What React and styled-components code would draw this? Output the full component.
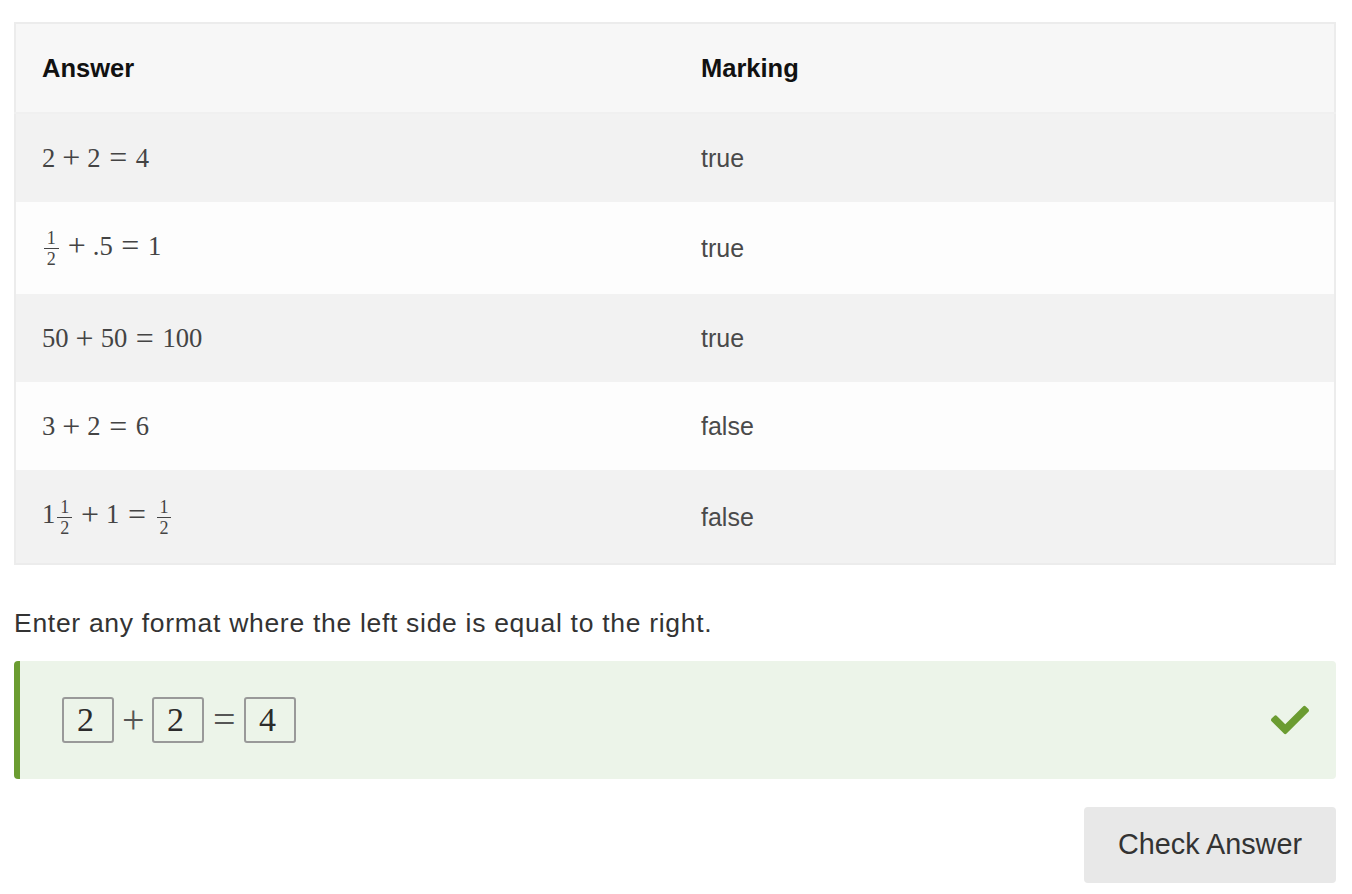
import * as React from 'react'
import { createGlobalStyle, default as styled } from 'styled-components'
import { FaCheck } from 'react-icons/fa'

const Global = createGlobalStyle`
  body {
    margin: 0;
    background: #fff;
    font-family: "Liberation Sans", Arial, sans-serif;
  }
`

const Page = styled.div`
  padding: 22px 16px 12px 14px;
`

const Table = styled.table`
  width: 100%;
  border-collapse: collapse;
  border: 2px solid #ececec;
`

const Th = styled.th`
  width: 50%;
  text-align: left;
  padding: 26px;
  line-height: 36px;
  font-size: 25.5px;
  font-weight: bold;
  color: #111;
  background: #f7f7f7;
  border-bottom: 2px solid #f0f0f0;
`

const Tr = styled.tr`
  background: ${p => (p.$alt ? '#fdfdfd' : '#f2f2f2')};
`

const Td = styled.td`
  padding: 26px;
  line-height: 36px;
  font-size: 25px;
  color: #4a4a4a;
  vertical-align: middle;
`

const MathExpr = styled.span`
  font-family: "Liberation Serif", "DejaVu Serif", serif;
  font-size: 26.6px;
  color: #444;
  white-space: nowrap;
`

const Op = styled.span`
  display: inline-block;
  font-size: 1.2em;
  line-height: 1;
  vertical-align: -0.04em;
  margin: 0 ${p => p.$space}em;
`

const Frac = styled.span`
  display: inline-flex;
  flex-direction: column;
  align-items: center;
  vertical-align: middle;
  font-size: 0.68em;
  line-height: 1;
  margin: 0 0.12em;
`

const FracTop = styled.span`
  padding: 0 0.15em 1px;
  border-bottom: 1px solid currentColor;
`

const FracBottom = styled.span`
  padding-top: 1px;
`

const Instruction = styled.p`
  margin: 40px 0 20px;
  font-size: 26.5px;
  letter-spacing: 0.7px;
  line-height: 36px;
  color: #333;
`

const Feedback = styled.div`
  display: flex;
  align-items: center;
  justify-content: space-between;
  height: 118px;
  box-sizing: border-box;
  padding: 0 27px 0 42px;
  background: #ecf4e9;
  border-left: 6px solid #6b9c31;
  border-radius: 4px;
`

const Field = styled.div`
  display: flex;
  align-items: center;
  font-family: "Liberation Serif", "DejaVu Serif", serif;
  color: #333;
`

const Slot = styled.span`
  display: inline-flex;
  align-items: center;
  box-sizing: border-box;
  width: 52px;
  height: 46px;
  padding-left: 13px;
  border: 2px solid #999;
  border-radius: 3px;
  font-size: 34px;
  color: #2b2b2b;
`

const FieldOp = styled.span`
  display: inline-block;
  width: 22px;
  margin: 0 ${p => p.$gap}px;
  text-align: center;
  font-size: 40px;
  line-height: 1;
  color: #555;
`

const Tick = styled(FaCheck)`
  color: #6b9c31;
  width: 38px;
  height: 38px;
`

const Actions = styled.div`
  display: flex;
  justify-content: flex-end;
  margin-top: 28px;
`

const CheckButton = styled.button`
  height: 76px;
  padding: 0 34px;
  border: none;
  border-radius: 4px;
  background: #e8e8e8;
  font-family: "Liberation Sans", Arial, sans-serif;
  font-size: 28.8px;
  color: #333;
`

const plus = <Op $space={0.22}>+</Op>
const eq = <Op $space={0.27}>=</Op>
const half = (
  <Frac>
    <FracTop>1</FracTop>
    <FracBottom>2</FracBottom>
  </Frac>
)

const rows = [
  { expr: <>2{plus}2{eq}4</>, mark: 'true' },
  { expr: <>{half}{plus}.5{eq}1</>, mark: 'true' },
  { expr: <>50{plus}50{eq}100</>, mark: 'true' },
  { expr: <>3{plus}2{eq}6</>, mark: 'false' },
  { expr: <>1{half}{plus}1{eq}{half}</>, mark: 'false' },
]

export default function App() {
  return (
    <Page>
      <Global />
      <Table>
        <thead>
          <tr>
            <Th>Answer</Th>
            <Th>Marking</Th>
          </tr>
        </thead>
        <tbody>
          {rows.map((r, i) => (
            <Tr key={i} $alt={i % 2 === 1}>
              <Td><MathExpr>{r.expr}</MathExpr></Td>
              <Td>{r.mark}</Td>
            </Tr>
          ))}
        </tbody>
      </Table>

      <Instruction>Enter any format where the left side is equal to the right.</Instruction>

      <Feedback>
        <Field>
          <Slot>2</Slot>
          <FieldOp $gap={8}>+</FieldOp>
          <Slot>2</Slot>
          <FieldOp $gap={9}>=</FieldOp>
          <Slot>4</Slot>
        </Field>
        <Tick />
      </Feedback>

      <Actions>
        <CheckButton>Check Answer</CheckButton>
      </Actions>
    </Page>
  )
}
